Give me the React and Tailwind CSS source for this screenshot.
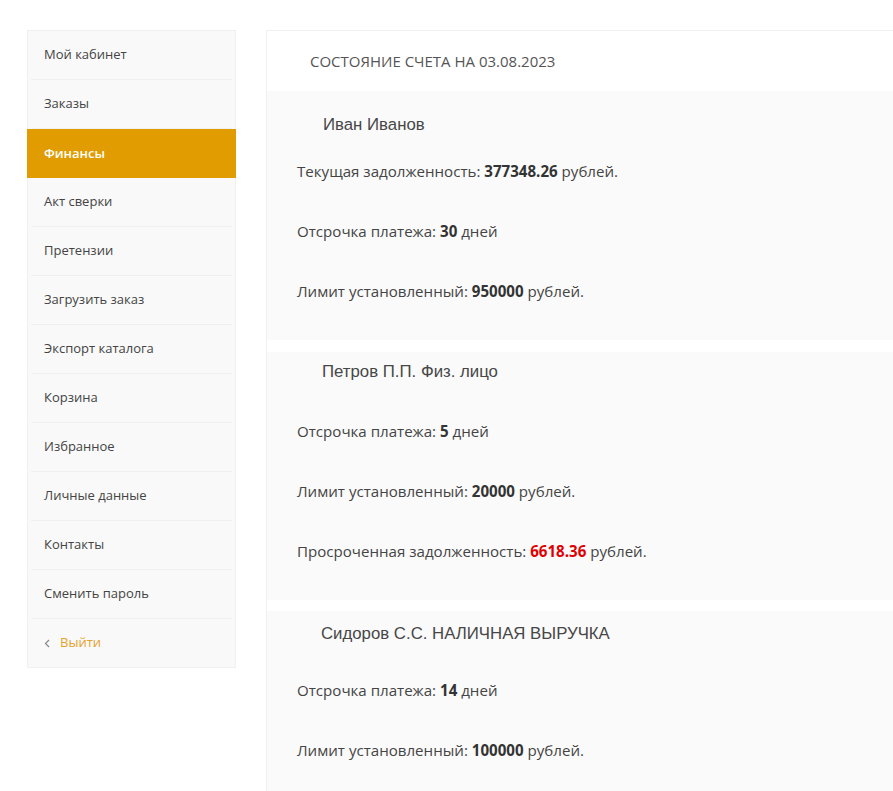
import React from 'react';

const menu = [
  'Мой кабинет',
  'Заказы',
  'Финансы',
  'Акт сверки',
  'Претензии',
  'Загрузить заказ',
  'Экспорт каталога',
  'Корзина',
  'Избранное',
  'Личные данные',
  'Контакты',
  'Сменить пароль',
];

const accounts = [
  {
    name: 'Иван Иванов',
    box: 'pt-[23px] pb-[38px] mb-[12px]',
    nameX: 'pl-[26px]',
    gap: 'mt-[24px]',
    rows: [
      { label: 'Текущая задолженность:', value: '377348.26', unit: 'рублей.' },
      { label: 'Отсрочка платежа:', value: '30', unit: 'дней' },
      { label: 'Лимит установленный:', value: '950000', unit: 'рублей.' },
    ],
  },
  {
    name: 'Петров П.П. Физ. лицо',
    box: 'pt-[9px] pb-[38px] mb-[11px]',
    nameX: 'pl-[25px]',
    gap: 'mt-[37px]',
    rows: [
      { label: 'Отсрочка платежа:', value: '5', unit: 'дней' },
      { label: 'Лимит установленный:', value: '20000', unit: 'рублей.' },
      { label: 'Просроченная задолженность:', value: '6618.36', unit: 'рублей.', red: true },
    ],
  },
  {
    name: 'Сидоров С.С. НАЛИЧНАЯ ВЫРУЧКА',
    box: 'pt-[12px] pb-[40px]',
    nameX: 'pl-[24px]',
    gap: 'mt-[34px]',
    rows: [
      { label: 'Отсрочка платежа:', value: '14', unit: 'дней' },
      { label: 'Лимит установленный:', value: '100000', unit: 'рублей.' },
    ],
  },
];

const Sidebar = () => (
  <aside className="w-[209px] shrink-0 self-start bg-[#f9f9f9] border border-[#f0f0f0] text-[13px] text-[#444]">
    {menu.map((item) =>
      item === 'Финансы' ? (
        <div key={item} className="h-[49px] flex items-center pl-[17px] -mx-px bg-[#e09c00] text-white font-semibold">
          {item}
        </div>
      ) : (
        <div key={item} className="h-[49px] flex items-center border-b border-[#f0f0f0] mx-[3px] pl-[13px]">
          {item}
        </div>
      )
    )}
    <div className="h-[48px] flex items-center pl-4 gap-[10px]">
      <svg width="6" height="9" viewBox="0 0 6 9" fill="none">
        <path d="M5 1L1.5 4.5L5 8" stroke="#888" strokeWidth="1.2" />
      </svg>
      <span className="text-[#e5a22d]">Выйти</span>
    </div>
  </aside>
);

const Account = ({ acc }) => (
  <div className={`bg-[#fafafa] pl-[30px] ${acc.box}`}>
    <div className={`${acc.nameX} h-[22px] flex items-center text-[16.8px] text-[#474747] font-['Liberation_Sans',Arial,sans-serif]`}>
      {acc.name}
    </div>
    <div className={`flex flex-col gap-[38px] ${acc.gap}`}>
      {acc.rows.map((r) => (
        <p key={r.label} className="h-[22px] flex items-center text-[15.1px] text-[#444]">
          {r.label}&nbsp;
          <b className={`font-bold ${r.red ? 'text-[#e00000]' : 'text-[#333]'}`}>{r.value}</b>
          &nbsp;{r.unit}
        </p>
      ))}
    </div>
  </div>
);

export default function App() {
  return (
    <div className="min-h-[791px] bg-white font-['Open_Sans','Noto_Sans',sans-serif] flex gap-[30px] pl-[27px] pt-[30px] overflow-hidden">
      <Sidebar />
      <main className="flex-1 border-t border-l border-[#f0f0f0]">
        <div className="h-[60px] flex items-center pl-[43px] text-[15px] text-[#555] uppercase">
          Состояние счета на 03.08.2023
        </div>
        {accounts.map((acc) => (
          <Account key={acc.name} acc={acc} />
        ))}
      </main>
    </div>
  );
}
